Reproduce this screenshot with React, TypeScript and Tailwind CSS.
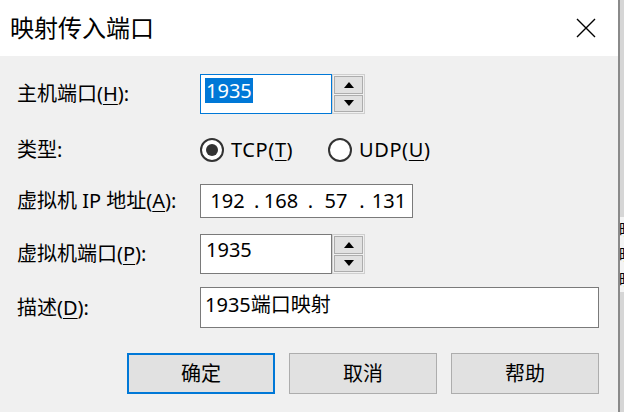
import { ReactNode } from 'react';

const font = { fontFamily: '"Noto Sans", "Noto Sans CJK SC", sans-serif' };

function Key({ children }: { children: ReactNode }) {
  return <span className="underline underline-offset-[3px] decoration-1">{children}</span>;
}

function Arrow({ up }: { up?: boolean }) {
  return (
    <svg width="10" height="6" viewBox="0 0 10 6">
      {up ? <path d="M0 6 L5 0 L10 6 Z" fill="#000" /> : <path d="M0 0 L10 0 L5 6 Z" fill="#000" />}
    </svg>
  );
}

function Spinner({ focused, children }: { focused?: boolean; children: ReactNode }) {
  return (
    <div className="flex h-[40px]">
      <div
        className={`w-[132px] h-full bg-white border ${
          focused ? 'border-[#0078d7]' : 'border-[#7a7a7a]'
        } flex items-start pl-[4px] pt-[2px]`}
      >
        {children}
      </div>
      <div className="w-[33px] h-full flex flex-col gap-[1px] p-[1px] border border-[#cfcfcf] bg-[#f0f0f0]">
        <div className="flex-1 border border-[#adadad] bg-[#e1e1e1] flex items-center justify-center">
          <Arrow up />
        </div>
        <div className="flex-1 border border-[#adadad] bg-[#e1e1e1] flex items-center justify-center">
          <Arrow />
        </div>
      </div>
    </div>
  );
}

function Radio({ checked, className, children }: { checked?: boolean; className?: string; children: ReactNode }) {
  return (
    <div className={`flex items-center gap-[7px] ${className ?? ''}`}>
      <div className="w-[24px] h-[24px] rounded-full border-2 border-[#333] bg-white flex items-center justify-center">
        {checked && <div className="w-[12px] h-[12px] rounded-full bg-[#333]" />}
      </div>
      <span className="tracking-[0.6px]">{children}</span>
    </div>
  );
}

function Row({ label, className, children }: { label: ReactNode; className: string; children: ReactNode }) {
  return (
    <div className={`grid grid-cols-[200px_1fr] items-center ${className}`}>
      <div className="pl-[17px]">{label}</div>
      <div className="flex items-center">{children}</div>
    </div>
  );
}

export default function App() {
  return (
    <div className="flex w-[624px] h-[412px] overflow-hidden text-[20px] text-black leading-[26px]" style={font}>
      {/* Dialog */}
      <div className="w-[618px] h-full flex flex-col bg-[#f0f0f0]">
        <div className="h-[56px] bg-white flex items-center justify-between pl-[10px] pr-[22px]">
          <span className="text-[24px]">映射传入端口</span>
          <svg width="20" height="20" viewBox="0 0 20 20">
            <path d="M1 1 L19 19 M19 1 L1 19" stroke="#000" strokeWidth="1.4" />
          </svg>
        </div>

        <div className="flex flex-col pr-[19px] pt-[18px]">
          <Row label={<>主机端口(<Key>H</Key>):</>} className="h-[40px]">
            <Spinner focused>
              <span className="bg-[#0078d7] text-white px-[1px] h-[25px] leading-[25px] mt-[1px]">1935</span>
            </Spinner>
          </Row>

          <Row label="类型:" className="h-[24px] mt-[23px]">
            <Radio checked className="w-[128px]">
              TCP(<Key>T</Key>)
            </Radio>
            <Radio>
              UDP(<Key>U</Key>)
            </Radio>
          </Row>

          <Row label={<>虚拟机 IP 地址(<Key>A</Key>):</>} className="h-[34px] mt-[23px]">
            <div className="w-[213px] h-[34px] bg-white border border-[#7a7a7a] flex items-center">
              <span className="w-[53px] text-center">192</span>
              <span className="w-[6px]">.</span>
              <span className="w-[42px] text-center">168</span>
              <span className="w-[12px] text-right pr-[1px]">.</span>
              <span className="w-[44px] text-center">57</span>
              <span className="w-[8px] text-center">.</span>
              <span className="flex-1 text-center">131</span>
            </div>
          </Row>

          <Row label={<>虚拟机端口(<Key>P</Key>):</>} className="h-[40px] mt-[16px]">
            <Spinner>
              <span className="px-[1px]">1935</span>
            </Spinner>
          </Row>

          <Row label={<>描述(<Key>D</Key>):</>} className="h-[41px] mt-[13px]">
            <div className="flex-1 h-[41px] bg-white border border-[#7a7a7a] pl-[4px] pt-[4px]">1935端口映射</div>
          </Row>

          <div className="flex justify-end gap-[14px] mt-[25px]">
            <button className="w-[148px] h-[41px] border-2 border-[#0078d7] bg-[#e1e1e1]">确定</button>
            <button className="w-[148px] h-[41px] border border-[#adadad] bg-[#e1e1e1]">取消</button>
            <button className="w-[148px] h-[41px] border border-[#adadad] bg-[#e1e1e1]">帮助</button>
          </div>
        </div>
      </div>

      {/* Window behind */}
      <div className="flex-1 h-full border-l-2 border-[#8a8a8a] bg-[#d6d6d6] overflow-hidden flex flex-col">
        <div className="h-[217px]" />
        <div className="bg-[#f4f4f4] text-[15px] leading-[25px] whitespace-nowrap -ml-[1px]">
          <div>映射</div>
          <div>映射</div>
          <div>映射</div>
        </div>
      </div>
    </div>
  );
}
